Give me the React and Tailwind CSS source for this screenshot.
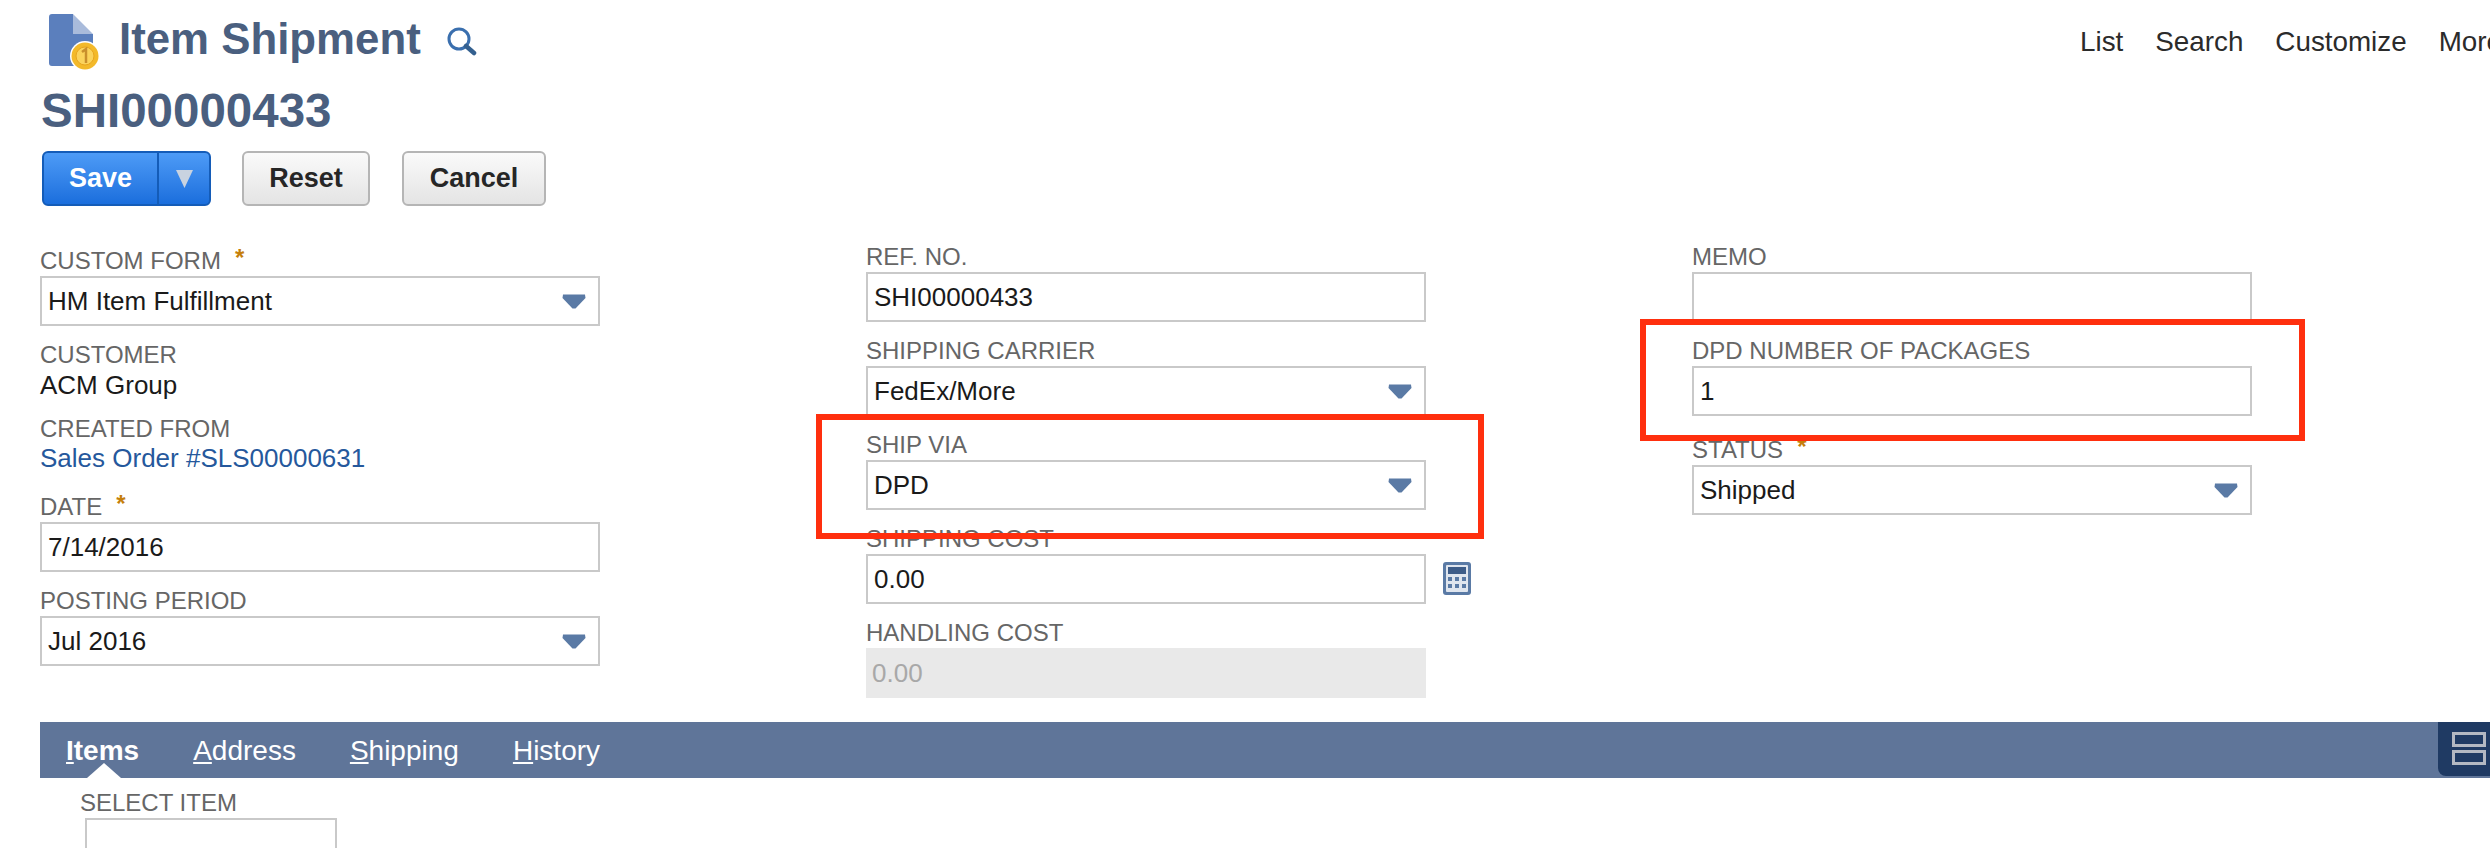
const Arrow = () => (
  <svg width="24" height="15" viewBox="0 0 24 15" className="shrink-0">
    <path d="M1 0.5 H23 L23.5 4 L13.5 14.5 H10.5 L0.5 4 Z" fill="#5a7aa5" />
  </svg>
);

const Label = ({ children, required, className = '' }) => (
  <div className={`h-[24px] text-[24px] leading-[24px] text-[#666] whitespace-nowrap ${className}`}>
    {children}
    {required && <span className="ml-[14px] font-bold text-[#c57f0c] relative -top-[3px]">*</span>}
  </div>
);

const Input = ({ value, select, className = '' }) => (
  <div className={`h-[50px] w-[560px] shrink-0 border-2 border-[#c9c9c9] bg-white flex items-center justify-between pl-[6px] pr-[12px] text-[26px] text-[#1a1a1a] ${className}`}>
    <span>{value}</span>
    {select && <Arrow />}
  </div>
);

const Field = ({ label, value, select, required, className = 'mb-[17px]' }) => (
  <div className={className}>
    <Label required={required} className="mb-[3px]">{label}</Label>
    <Input value={value} select={select} />
  </div>
);

const Calculator = () => (
  <svg width="28" height="33" viewBox="0 0 28 33" className="ml-[17px] -mt-[2px] shrink-0">
    <rect width="28" height="33" rx="3" fill="#5a7aa5" />
    <rect x="3" y="3" width="22" height="27" rx="1" fill="#dfe5ee" />
    <rect x="5" y="5" width="18" height="7" fill="#3d5c88" />
    <g fill="#5a7aa5">
      <rect x="5" y="15" width="4" height="4" />
      <rect x="12" y="15" width="4" height="4" />
      <rect x="19" y="15" width="4" height="4" />
      <rect x="5" y="22" width="4" height="4" />
      <rect x="12" y="22" width="4" height="4" />
      <rect x="19" y="22" width="4" height="4" />
    </g>
  </svg>
);

const DocIcon = () => (
  <svg width="52" height="56" viewBox="0 0 52 56" className="shrink-0">
    <path d="M3 0 H24 V20 H44 V49 Q44 52 41 52 H3 Q0 52 0 49 V3 Q0 0 3 0 Z" fill="#5b7fbd" />
    <path d="M24 0 L44 20 H24 Z" fill="#a9bbdb" />
    <circle cx="36" cy="42" r="15" fill="#fff" />
    <circle cx="36" cy="42" r="13.5" fill="#f3b92a" />
    <circle cx="36" cy="42" r="9" fill="#fbd35c" stroke="#e8a51e" strokeWidth="1" />
    <path d="M33 38 L37 35 V49" fill="none" stroke="#c98f2c" strokeWidth="2.5" />
  </svg>
);

const SearchIcon = () => (
  <svg width="30" height="29" viewBox="0 0 30 29" className="shrink-0">
    <circle cx="12" cy="12" r="10" fill="none" stroke="#3a6fae" strokeWidth="3" />
    <path d="M19 19 L27 26" stroke="#34608f" strokeWidth="4.5" strokeLinecap="round" />
  </svg>
);

const tabs = [
  { key: 'I', rest: 'tems', active: true },
  { key: 'A', rest: 'ddress' },
  { key: 'S', rest: 'hipping' },
  { key: 'H', rest: 'istory' },
];

export default function App() {
  return (
    <div className="relative h-[848px] w-full overflow-hidden bg-white font-['Liberation_Sans',Arial,sans-serif]">
      {/* Title row */}
      <div className="flex h-[87px] pt-[14px] pl-[49px]">
        <div className="flex w-[2031px] shrink-0 items-start">
          <DocIcon />
          <h1 className="ml-[18px] mt-[3px] text-[43.8px] leading-[44px] font-bold text-[#4a5f7f]">Item Shipment</h1>
          <div className="ml-[26px] mt-[13px]"><SearchIcon /></div>
        </div>
        <div className="mt-[14px] flex shrink-0 gap-[32px] text-[27.8px] leading-[28px] text-[#2b2b2b]">
          <span>List</span>
          <span>Search</span>
          <span>Customize</span>
          <span>More</span>
        </div>
      </div>

      <div className="h-[64px] pl-[41px] text-[47.5px] leading-[47px] font-bold text-[#4a5f7f]">SHI00000433</div>

      {/* Buttons */}
      <div className="flex h-[55px] pl-[42px] text-[27px] font-bold">
        <div className="flex w-[169px] rounded-[6px] border-2 border-[#145cb8] bg-gradient-to-b from-[#4d9bf6] to-[#1a6edd] text-white">
          <div className="flex w-[115px] items-center justify-center border-r-2 border-[#145cb8]">Save</div>
          <div className="flex flex-1 items-center justify-center">
            <svg width="17" height="18" viewBox="0 0 17 18"><path d="M0 0 H17 L8.5 18 Z" fill="#c9d3e0" /></svg>
          </div>
        </div>
        <div className="ml-[31px] flex w-[128px] items-center justify-center rounded-[6px] border-2 border-[#b5b5b5] bg-gradient-to-b from-[#fafafa] to-[#e4e4e4] text-[#262626]">Reset</div>
        <div className="ml-[32px] flex w-[144px] items-center justify-center rounded-[6px] border-2 border-[#b5b5b5] bg-gradient-to-b from-[#fafafa] to-[#e4e4e4] text-[#262626]">Cancel</div>
      </div>

      {/* Form columns */}
      <div className="relative mt-[39px] grid h-[453px] grid-cols-[560px_560px_560px] gap-x-[266px] pl-[40px]">
        <div className="pt-[4px]">
          <Field label="CUSTOM FORM" value="HM Item Fulfillment" select required />
          <Label className="mb-[5px]">CUSTOMER</Label>
          <div className="mb-[19px] text-[26px] leading-[26px] text-[#1a1a1a]">ACM Group</div>
          <Label className="mb-[4px]">CREATED FROM</Label>
          <div className="mb-[24px] text-[26px] leading-[26px] text-[#25589c]">Sales Order #SLS00000631</div>
          <Field label="DATE" value="7/14/2016" required />
          <Field label="POSTING PERIOD" value="Jul 2016" select />
        </div>

        <div>
          <Field label="REF. NO." value="SHI00000433" />
          <Field label="SHIPPING CARRIER" value="FedEx/More" select />
          <Field label="SHIP VIA" value="DPD" select />
          <div className="mb-[17px]">
            <Label className="mb-[3px]">SHIPPING COST</Label>
            <div className="flex items-center">
              <Input value="0.00" />
              <Calculator />
            </div>
          </div>
          <Label className="mb-[3px]">HANDLING COST</Label>
          <div className="flex h-[50px] w-[560px] items-center bg-[#e9e9e9] pl-[6px] text-[26px] text-[#a8a8a8]">0.00</div>
        </div>

        <div>
          <Field label="MEMO" value="" />
          <Field label="DPD NUMBER OF PACKAGES" value="1" className="mb-[22px]" />
          <Field label="STATUS" value="Shipped" select required />
        </div>

        {/* Red annotation boxes */}
        <div className="absolute left-[816px] top-[169px] h-[125px] w-[668px] border-[6px] border-[#ff2f0e]" />
        <div className="absolute left-[1640px] top-[74px] h-[122px] w-[665px] border-[6px] border-[#ff2f0e]" />
      </div>

      {/* Tab bar */}
      <div className="relative mt-[24px] ml-[40px] flex h-[56px] gap-[54px] bg-[#5f7599] pl-[26px] pt-[15px] text-[28px] leading-[28px] text-white">
        {tabs.map((tab) => (
          <span key={tab.key} className={tab.active ? 'relative font-bold' : ''}>
            <span className="underline">{tab.key}</span>{tab.rest}
            {tab.active && (
              <span className="absolute left-[21px] top-[26px] h-0 w-0 border-x-[17px] border-b-[15px] border-x-transparent border-b-white" />
            )}
          </span>
        ))}
        <div className="absolute right-0 top-0 flex h-[54px] w-[52px] flex-col gap-[3px] rounded-bl-[8px] bg-[#1f3a63] pl-[14px] pt-[10px]">
          <div className="h-[15px] w-[34px] border-[3px] border-[#b3b8c2]" />
          <div className="h-[15px] w-[34px] border-[3px] border-[#b3b8c2]" />
        </div>
      </div>

      <div className="mt-[13px] pl-[80px]">
        <Label className="mb-[3px]">SELECT ITEM</Label>
        <div className="ml-[5px] h-[50px] w-[252px] border-2 border-[#c9c9c9]" />
      </div>
    </div>
  );
}
